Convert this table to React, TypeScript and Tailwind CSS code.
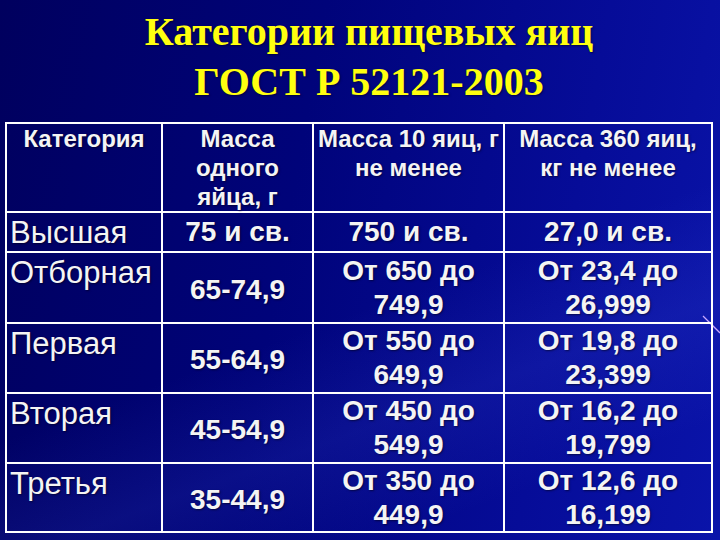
import React from "react";

const sans = "font-['Liberation_Sans',Arial,sans-serif]";
const shadow = "[text-shadow:1px_1px_2px_rgba(0,0,0,0.5)]";

type Row = {
  cat: string;
  one: string;
  ten: string[];
  many: string[];
};

const rows: Row[] = [
  { cat: "Высшая", one: "75 и св.", ten: ["750 и св."], many: ["27,0 и св."] },
  { cat: "Отборная", one: "65-74,9", ten: ["От 650 до", "749,9"], many: ["От 23,4 до", "26,999"] },
  { cat: "Первая", one: "55-64,9", ten: ["От 550 до", "649,9"], many: ["От 19,8 до", "23,399"] },
  { cat: "Вторая", one: "45-54,9", ten: ["От 450 до", "549,9"], many: ["От 16,2 до", "19,799"] },
  { cat: "Третья", one: "35-44,9", ten: ["От 350 до", "449,9"], many: ["От 12,6 до", "16,199"] },
];

const cell = "border-r-2 border-b-2 border-white";

export default function App() {
  return (
    <div className="relative w-[720px] h-[540px] overflow-hidden bg-[linear-gradient(100deg,#00005e_0%,#00037a_40%,#060c98_75%,#0a14aa_100%)]">
      <div className="absolute inset-0 bg-[linear-gradient(160deg,rgba(0,0,0,0)_55%,rgba(70,90,230,0.14)_70%,rgba(0,0,0,0)_85%)]" />
      <svg className="absolute left-[700px] top-[312px]" width="20" height="24" viewBox="0 0 20 24">
        <line x1="3" y1="4" x2="20" y2="21" stroke="#c8a8ff" strokeWidth="1.3" />
      </svg>
      <div className="relative flex flex-col">
        <div
          className={`flex flex-col items-center pl-[18px] pt-[7px] font-['Liberation_Serif','Times_New_Roman',serif] font-bold text-[40px] leading-[50px] text-[#ffff10] ${shadow}`}
        >
          <div>Категории пищевых яиц</div>
          <div>ГОСТ Р 52121-2003</div>
        </div>
        <div
          className={`ml-[5px] mt-[15px] grid w-[708px] grid-cols-[156px_151px_191px_208px] grid-rows-[89px_40px_71px_70px_70px_69px] border-l-2 border-t-2 border-white text-[#f4f4f4] ${sans} ${shadow}`}
        >
          <div className={`${cell} text-center font-bold text-[24px] leading-[29px]`}>Категория</div>
          <div className={`${cell} text-center font-bold text-[24px] leading-[29px]`}>
            Масса
            <br />
            одного
            <br />
            яйца, г
          </div>
          <div className={`${cell} text-center font-bold text-[24px] leading-[29px] whitespace-nowrap`}>
            Масса 10 яиц, г
            <br />
            не менее
          </div>
          <div className={`${cell} text-center font-bold text-[24px] leading-[29px] whitespace-nowrap`}>
            Масса 360 яиц,
            <br />
            кг не менее
          </div>
          {rows.map((r, i) => (
            <React.Fragment key={r.cat}>
              <div className={`${cell} pl-[3px] pt-[3px] text-[31px] leading-[34px] whitespace-nowrap`}>{r.cat}</div>
              <div
                className={`${cell} flex items-center justify-center font-bold text-[28px] leading-[34px] ${i === 0 ? "" : "pt-[4px]"}`}
              >
                {r.one}
              </div>
              <div className={`${cell} flex flex-col items-center justify-center font-bold text-[28px] leading-[34px] whitespace-nowrap`}>
                {r.ten.map((t) => (
                  <div key={t}>{t}</div>
                ))}
              </div>
              <div className={`${cell} flex flex-col items-center justify-center font-bold text-[28px] leading-[34px] whitespace-nowrap`}>
                {r.many.map((t) => (
                  <div key={t}>{t}</div>
                ))}
              </div>
            </React.Fragment>
          ))}
        </div>
      </div>
    </div>
  );
}
